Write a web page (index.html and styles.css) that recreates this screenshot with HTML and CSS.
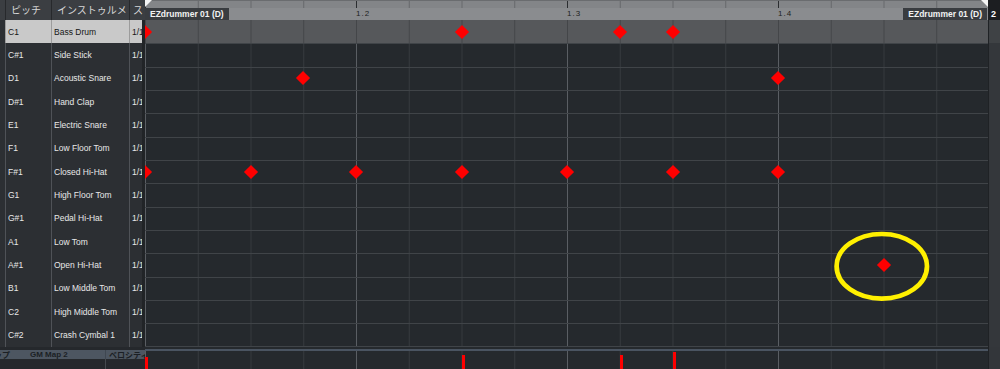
FILE: index.html
```html
<!DOCTYPE html>
<html lang="ja">
<head>
<meta charset="utf-8">
<title>Drum Editor</title>
<link rel="stylesheet" href="styles.css">
</head>
<body>
<div class="app">
  <div class="top">
    <div class="hdr">
      <div class="hc"></div>
      <div class="hc">ピッチ</div>
      <div class="hc">インストゥルメ</div>
      <div class="hc">ス</div>
    </div>
    <div class="ruler">
      <div class="ticks"></div>
      <div class="beats">
        <div class="beat"></div>
        <div class="beat">1.2</div>
        <div class="beat">1.3</div>
        <div class="beat">1.4</div>
      </div>
      <span class="part l">EZdrummer 01 (D)</span>
      <span class="part r">EZdrummer 01 (D)</span>
      <span class="corner l"></span>
      <span class="corner r"></span>
    </div>
    <div class="ruler-end">2</div>
  </div>

  <div class="main">
    <div class="keys">
      <div class="key sel"><span></span><span>C1</span><span>Bass Drum</span><span>1/1</span></div>
      <div class="key"><span></span><span>C#1</span><span>Side Stick</span><span>1/1</span></div>
      <div class="key"><span></span><span>D1</span><span>Acoustic Snare</span><span>1/1</span></div>
      <div class="key"><span></span><span>D#1</span><span>Hand Clap</span><span>1/1</span></div>
      <div class="key"><span></span><span>E1</span><span>Electric Snare</span><span>1/1</span></div>
      <div class="key"><span></span><span>F1</span><span>Low Floor Tom</span><span>1/1</span></div>
      <div class="key"><span></span><span>F#1</span><span>Closed Hi-Hat</span><span>1/1</span></div>
      <div class="key"><span></span><span>G1</span><span>High Floor Tom</span><span>1/1</span></div>
      <div class="key"><span></span><span>G#1</span><span>Pedal Hi-Hat</span><span>1/1</span></div>
      <div class="key"><span></span><span>A1</span><span>Low Tom</span><span>1/1</span></div>
      <div class="key"><span></span><span>A#1</span><span>Open Hi-Hat</span><span>1/1</span></div>
      <div class="key"><span></span><span>B1</span><span>Low Middle Tom</span><span>1/1</span></div>
      <div class="key"><span></span><span>C2</span><span>High Middle Tom</span><span>1/1</span></div>
      <div class="key"><span></span><span>C#2</span><span>Crash Cymbal 1</span><span>1/1</span></div>
    </div>

    <div class="roll">
      <div class="row sel"></div>
      <div class="row"></div>
      <div class="row"></div>
      <div class="row"></div>
      <div class="row"></div>
      <div class="row"></div>
      <div class="row"></div>
      <div class="row"></div>
      <div class="row"></div>
      <div class="row"></div>
      <div class="row"></div>
      <div class="row"></div>
      <div class="row"></div>
      <div class="row last"></div>

      <i class="note" style="--s:0;--r:0"></i>
      <i class="note" style="--s:6;--r:0"></i>
      <i class="note" style="--s:9;--r:0"></i>
      <i class="note" style="--s:10;--r:0"></i>
      <i class="note" style="--s:3;--r:2"></i>
      <i class="note" style="--s:12;--r:2"></i>
      <i class="note" style="--s:0;--r:6"></i>
      <i class="note" style="--s:2;--r:6"></i>
      <i class="note" style="--s:4;--r:6"></i>
      <i class="note" style="--s:6;--r:6"></i>
      <i class="note" style="--s:8;--r:6"></i>
      <i class="note" style="--s:10;--r:6"></i>
      <i class="note" style="--s:12;--r:6"></i>
      <i class="note" style="--s:14;--r:10"></i>

      <svg class="mark" width="100" height="75" viewBox="0 0 100 75">
        <ellipse cx="49.8" cy="37.3" rx="45.2" ry="32.3" fill="none" stroke="#fff000" stroke-width="4.7"/>
      </svg>
    </div>

    <div class="roll-end"><div class="end-sel"></div></div>
  </div>

  <div class="lower">
    <div class="lane-head">
      <div class="lh-gap"></div>
      <div class="lh-bar">
        <span class="a">マップ</span>
        <span class="b">GM Map 2</span>
        <span class="c">ベロシティ</span>
      </div>
      <div class="lh-under"><span class="u1"></span><span class="u2"></span></div>
    </div>
    <div class="vel">
      <div class="vgap"></div>
      <div class="vsep"></div>
      <div class="vlane">
        <i class="vbar" style="--s:0;--h:12px"></i>
        <i class="vbar" style="--s:6;--h:14px"></i>
        <i class="vbar" style="--s:9;--h:14px"></i>
        <i class="vbar" style="--s:10;--h:17px"></i>
      </div>
    </div>
    <div class="vel-end"></div>
  </div>
</div>
</body>
</html>
```

FILE: styles.css
```css
* { box-sizing: border-box; }
html, body { margin: 0; padding: 0; }
body {
  width: 1000px;
  height: 369px;
  overflow: hidden;
  background: #25292d;
  font-family: "Liberation Sans", Arial, "Noto Sans CJK JP", sans-serif;
}

.app {
  display: flex;
  flex-direction: column;
  width: 1000px;
  height: 369px;
}

/* ---------- top row ---------- */
.top { display: flex; height: 20px; flex: none; }

.hdr {
  width: 145px;
  flex: none;
  display: grid;
  grid-template-columns: 5px 46px 78px 16px;
  background: #3b3e42;
}
.hc {
  border-left: 1px solid #27292c;
  color: #d6d6d6;
  font-family: "Noto Sans CJK JP", sans-serif;
  font-size: 10px;
  line-height: 19px;
  padding-left: 5px;
  overflow: hidden;
  white-space: nowrap;
}
.hc:first-child { border-left: 0; }
.hc:last-child { padding-left: 3px; }

.ruler {
  width: 843px;
  flex: none;
  position: relative;
  background: #8a8c8f;
  display: flex;
  flex-direction: column;
  overflow: hidden;
}
.ticks {
  height: 8px;
  flex: none;
  background-color: #838588;
  background-image:
    linear-gradient(90deg, #2b2d30 1px, transparent 1px),
    linear-gradient(90deg, #66686b 1px, transparent 1px);
  background-size: 211px 100%, 52.75px 100%;
  border-top: 1px solid #6a6c6f;
}
.beats { flex: 1; display: flex; }
.beat {
  flex: none;
  width: 211px;
  font-size: 8px;
  line-height: 12px;
  color: #1e1f21;
  letter-spacing: 1px;
  padding-left: 0;
}
.part {
  position: absolute;
  top: 8px;
  height: 12px;
  background: #393c40;
  color: #f2f2f2;
  font-weight: bold;
  font-size: 8.5px;
  line-height: 12px;
  padding: 0 5px;
  white-space: nowrap;
}
.part.l { left: 0; }
.part.r { right: 1px; }
.corner {
  position: absolute;
  top: 0;
  width: 0;
  height: 0;
  border-top: 7px solid #f4f4f4;
}
.corner.l { left: 0; border-right: 7px solid transparent; }
.corner.r { right: 0; border-left: 7px solid transparent; }

.ruler-end {
  width: 12px;
  flex: none;
  background: #1c1e21;
  color: #ffffff;
  font-weight: bold;
  font-size: 9px;
  line-height: 12px;
  padding: 8px 0 0 3px;
}

/* ---------- main ---------- */
.main { display: flex; height: 326.667px; flex: none; }

.keys {
  width: 145px;
  flex: none;
  display: flex;
  flex-direction: column;
  background: #2c2f33;
  border-right: 3px solid #212427;
}
.key {
  height: 23.333px;
  flex: none;
  display: grid;
  grid-template-columns: 5px 46px 78px 13px;
  font-size: 8.5px;
  color: #e8e8e8;
}
.key > span {
  border-left: 1px solid #4f5257;
  padding-left: 2px;
  display: flex;
  align-items: center;
  overflow: hidden;
  white-space: nowrap;
}
.key > span:first-child { border-left: 0; }
.key.sel > span:not(:first-child) {
  background: #c9c9c9;
  color: #161616;
  border-left-color: #9c9c9c;
}

.roll {
  width: 843px;
  flex: none;
  position: relative;
  overflow: hidden;
  display: flex;
  flex-direction: column;
}
.row {
  height: 23.333px;
  flex: none;
  border-top: 1px solid #404448;
  background-color: #25292d;
  background-image:
    linear-gradient(90deg, #5a5e63 1px, transparent 1px),
    linear-gradient(90deg, #363a3e 1px, transparent 1px);
  background-size: 211px 100%, 52.75px 100%;
}
.row.sel {
  border-top: 0;
  background-color: #56585b;
  background-image: linear-gradient(90deg, #444649 1px, transparent 1px);
  background-size: 52.75px 100%;
}
.row.last { border-bottom: 1px solid #404448; }

.note {
  position: absolute;
  width: 10px;
  height: 10px;
  background: #ff0000;
  transform: rotate(45deg);
  left: calc(var(--s) * 52.75px - 5px);
  top: calc(var(--r) * 23.333px + 6.67px);
}

.mark {
  position: absolute;
  left: 687px;
  top: 209px;
}

.roll-end {
  width: 12px;
  flex: none;
  background: #34373b;
  border-left: 1px solid #1f2225;
}
.end-sel { height: 23.333px; background: #3f4245; }

/* ---------- velocity lane ---------- */
.lower { display: flex; flex: 1; }

.lane-head {
  width: 145px;
  flex: none;
  display: flex;
  flex-direction: column;
  background: #25282c;
}
.lh-gap { height: 3.333px; flex: none; }
.lh-bar {
  height: 9px;
  flex: none;
  display: flex;
  background: #4d5661;
  color: #1b1f24;
  font-weight: bold;
  font-size: 8px;
  line-height: 9px;
  white-space: nowrap;
}
.lh-bar .a {
  width: 12px;
  flex: none;
  display: flex;
  justify-content: flex-end;
  overflow: hidden;
  padding-right: 2px;
  font-family: "Noto Sans CJK JP", sans-serif;
}
.lh-bar .b { width: 93px; flex: none; padding-left: 18px; }
.lh-bar .c {
  width: 40px;
  flex: none;
  padding-left: 3px;
  overflow: hidden;
  border-left: 1px solid #3f4751;
  font-family: "Noto Sans CJK JP", sans-serif;
}
.lh-under { flex: 1; display: flex; }
.lh-under .u1 { width: 105px; flex: none; }
.lh-under .u2 { flex: 1; border-left: 1px solid #45494e; }

.vel {
  width: 843px;
  flex: none;
  display: flex;
  flex-direction: column;
}
.vgap { height: 2.333px; flex: none; background: #25292d; }
.vsep { height: 2px; flex: none; background: #4a5461; }
.vlane {
  flex: 1;
  position: relative;
  background-color: #25292d;
  background-image:
    linear-gradient(90deg, #5a5e63 1px, transparent 1px),
    linear-gradient(90deg, #363a3e 1px, transparent 1px);
  background-size: 211px 100%, 52.75px 100%;
}
.vbar {
  position: absolute;
  bottom: 0;
  width: 3px;
  height: var(--h);
  left: calc(var(--s) * 52.75px);
  background: #ff0000;
}
.vel-end {
  width: 12px;
  flex: none;
  background: #33363a;
  border-left: 1px solid #1f2225;
}
```
